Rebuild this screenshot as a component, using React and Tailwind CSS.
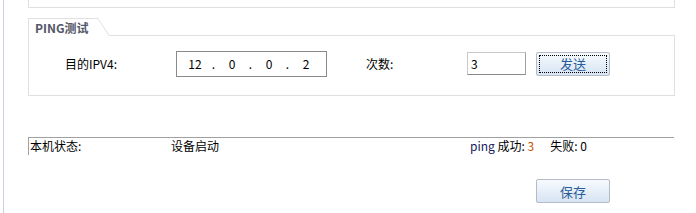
import React from 'react';

const font = { fontFamily: '"Noto Sans CJK SC", "DejaVu Sans", sans-serif' };

function IpInput({ parts }) {
  return (
    <div className="flex items-center w-[151px] h-[26px] border border-[#8a8a8a] bg-white text-[12px] pl-[10px]">
      {parts.map((p, i) => (
        <React.Fragment key={i}>
          <span className="w-[16px] text-center">{p}</span>
          {i < parts.length - 1 && <span className="w-[21px] text-center">.</span>}
        </React.Fragment>
      ))}
    </div>
  );
}

function Button({ children, focused }) {
  return (
    <button
      className="relative w-[74px] h-[24px] border border-[#b5bcc7] rounded-[2px] bg-gradient-to-b from-[#f7fafd] to-[#d6e4f3] text-[13px] text-[#2a5c9a] leading-none"
    >
      {focused && <span className="absolute inset-[2px] border border-dotted border-black" />}
      {children}
    </button>
  );
}

export default function App() {
  return (
    <div className="w-[696px] h-[213px] bg-white text-black text-[12px] pl-[3px]" style={font}>
      <div className="h-full border-l border-[#c9d1df] pl-[24px]">
        <div className="w-[647px] h-[8px] border-x border-b border-[#e0e0e0]" />

        <div className="mt-[10px] w-[647px]">
          <div className="flex h-[18px]">
            <div className="w-[70px] border-l border-t border-[#e0e0e0] pl-[6px] font-bold text-[12px] leading-[17px] text-[#55596a]">
              PING测试
            </div>
            <svg width="11" height="18" className="block">
              <line x1="0" y1="0.5" x2="11" y2="17.5" stroke="#e0e0e0" />
            </svg>
            <div className="flex-1 border-b border-[#e0e0e0]" />
          </div>
          <div className="h-[60px] border-x border-b border-[#e0e0e0] flex items-center pl-[36px] pb-[4px]">
            <span className="w-[111px]">目的IPV4:</span>
            <IpInput parts={['12', '0', '0', '2']} />
            <span className="ml-[39px] w-[101px]">次数:</span>
            <div className="w-[59px] h-[23px] border border-[#c8c8c8] border-b-[#8a8a8a] border-r-[#a0a0a0] pl-[3px] leading-[21px]">3</div>
            <div className="ml-[10px]">
              <Button focused>发送</Button>
            </div>
          </div>
        </div>

        <div className="mt-[41px] w-[646px] border-t border-[#a0a0a0] flex h-[18px] leading-[16px]">
          <span className="w-[143px] border-l border-[#a0a0a0] pl-[1px]">本机状态:</span>
          <span className="w-[299px]">设备启动</span>
          <span>
            <span className="text-[#1a1a60]">ping</span> 成功: <span className="text-[#c05000]">3</span>
            <span className="ml-[16px]">失败: 0</span>
          </span>
        </div>

        <div className="mt-[24px] pl-[508px]">
          <Button>保存</Button>
        </div>
      </div>
    </div>
  );
}
